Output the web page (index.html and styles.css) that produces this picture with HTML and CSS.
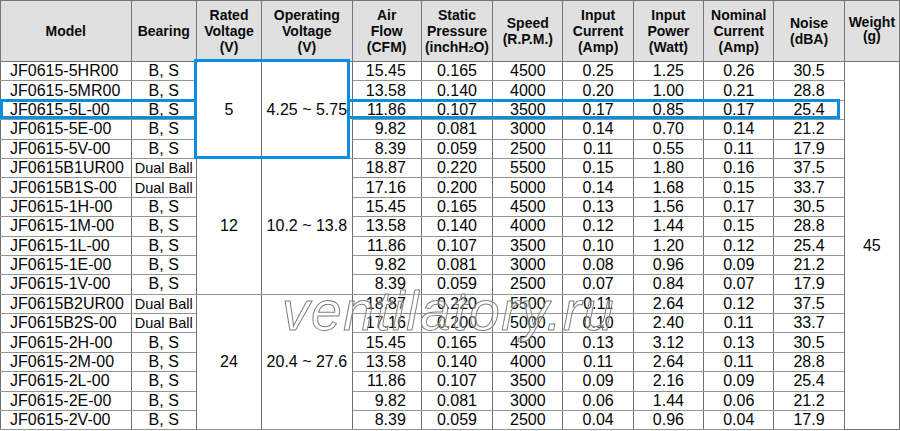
FILE: index.html
```html
<!DOCTYPE html>
<html>
<head>
<meta charset="utf-8">
<link rel="stylesheet" href="styles.css">
</head>
<body>
<div class="sheet">
  <table class="spec">
    <colgroup>
      <col class="c-model"><col class="c-bear"><col class="c-rated"><col class="c-oper"><col class="c-air"><col class="c-stat"><col class="c-speed"><col class="c-cur"><col class="c-pow"><col class="c-nom"><col class="c-noise"><col class="c-wt">
    </colgroup>
    <thead>
      <tr>
        <th>Model</th>
        <th>Bearing</th>
        <th>Rated<br>Voltage<br>(V)</th>
        <th>Operating<br>Voltage<br>(V)</th>
        <th>Air<br>Flow<br>(CFM)</th>
        <th>Static<br>Pressure<br>(inchH<span class="sub">2</span>O)</th>
        <th>Speed<br>(R.P.M.)</th>
        <th>Input<br>Current<br>(Amp)</th>
        <th>Input<br>Power<br>(Watt)</th>
        <th>Nominal<br>Current<br>(Amp)</th>
        <th>Noise<br>(dBA)</th>
        <th class="wt-h">Weight<br>(g)</th>
      </tr>
    </thead>
    <tbody>
      <tr><td class="model">JF0615-5HR00</td><td>B, S</td><td rowspan="5">5</td><td rowspan="5">4.25 ~ 5.75</td><td class="air">15.45</td><td>0.165</td><td>4500</td><td>0.25</td><td>1.25</td><td>0.26</td><td>30.5</td><td rowspan="19" class="wt">45</td></tr>
      <tr><td class="model">JF0615-5MR00</td><td>B, S</td><td class="air">13.58</td><td>0.140</td><td>4000</td><td>0.20</td><td>1.00</td><td>0.21</td><td>28.8</td></tr>
      <tr><td class="model">JF0615-5L-00</td><td>B, S</td><td class="air">11.86</td><td>0.107</td><td>3500</td><td>0.17</td><td>0.85</td><td>0.17</td><td>25.4</td></tr>
      <tr><td class="model">JF0615-5E-00</td><td>B, S</td><td class="air">9.82</td><td>0.081</td><td>3000</td><td>0.14</td><td>0.70</td><td>0.14</td><td>21.2</td></tr>
      <tr><td class="model">JF0615-5V-00</td><td>B, S</td><td class="air">8.39</td><td>0.059</td><td>2500</td><td>0.11</td><td>0.55</td><td>0.11</td><td>17.9</td></tr>
      <tr><td class="model">JF0615B1UR00</td><td class="dual">Dual Ball</td><td rowspan="7">12</td><td rowspan="7">10.2 ~ 13.8</td><td class="air">18.87</td><td>0.220</td><td>5500</td><td>0.15</td><td>1.80</td><td>0.16</td><td>37.5</td></tr>
      <tr><td class="model">JF0615B1S-00</td><td class="dual">Dual Ball</td><td class="air">17.16</td><td>0.200</td><td>5000</td><td>0.14</td><td>1.68</td><td>0.15</td><td>33.7</td></tr>
      <tr><td class="model">JF0615-1H-00</td><td>B, S</td><td class="air">15.45</td><td>0.165</td><td>4500</td><td>0.13</td><td>1.56</td><td>0.17</td><td>30.5</td></tr>
      <tr><td class="model">JF0615-1M-00</td><td>B, S</td><td class="air">13.58</td><td>0.140</td><td>4000</td><td>0.12</td><td>1.44</td><td>0.15</td><td>28.8</td></tr>
      <tr><td class="model">JF0615-1L-00</td><td>B, S</td><td class="air">11.86</td><td>0.107</td><td>3500</td><td>0.10</td><td>1.20</td><td>0.12</td><td>25.4</td></tr>
      <tr><td class="model">JF0615-1E-00</td><td>B, S</td><td class="air">9.82</td><td>0.081</td><td>3000</td><td>0.08</td><td>0.96</td><td>0.09</td><td>21.2</td></tr>
      <tr><td class="model">JF0615-1V-00</td><td>B, S</td><td class="air">8.39</td><td>0.059</td><td>2500</td><td>0.07</td><td>0.84</td><td>0.07</td><td>17.9</td></tr>
      <tr><td class="model">JF0615B2UR00</td><td class="dual">Dual Ball</td><td rowspan="7">24</td><td rowspan="7">20.4 ~ 27.6</td><td class="air">18.87</td><td>0.220</td><td>5500</td><td>0.11</td><td>2.64</td><td>0.12</td><td>37.5</td></tr>
      <tr><td class="model">JF0615B2S-00</td><td class="dual">Dual Ball</td><td class="air">17.16</td><td>0.200</td><td>5000</td><td>0.10</td><td>2.40</td><td>0.11</td><td>33.7</td></tr>
      <tr><td class="model">JF0615-2H-00</td><td>B, S</td><td class="air">15.45</td><td>0.165</td><td>4500</td><td>0.13</td><td>3.12</td><td>0.13</td><td>30.5</td></tr>
      <tr><td class="model">JF0615-2M-00</td><td>B, S</td><td class="air">13.58</td><td>0.140</td><td>4000</td><td>0.11</td><td>2.64</td><td>0.11</td><td>28.8</td></tr>
      <tr><td class="model">JF0615-2L-00</td><td>B, S</td><td class="air">11.86</td><td>0.107</td><td>3500</td><td>0.09</td><td>2.16</td><td>0.09</td><td>25.4</td></tr>
      <tr><td class="model">JF0615-2E-00</td><td>B, S</td><td class="air">9.82</td><td>0.081</td><td>3000</td><td>0.06</td><td>1.44</td><td>0.06</td><td>21.2</td></tr>
      <tr><td class="model">JF0615-2V-00</td><td>B, S</td><td class="air">8.39</td><td>0.059</td><td>2500</td><td>0.04</td><td>0.96</td><td>0.04</td><td>17.9</td></tr>
    </tbody>
  </table>
  <div class="hl-volt"></div>
  <div class="hl-row-left"></div>
  <div class="hl-row-right"></div>
  <div class="watermark">ventilatory.ru</div>
</div>
</body>
</html>
```
FILE: styles.css
```css
html, body {
  margin: 0;
  padding: 0;
  background: #ffffff;
}

body {
  font-family: "Liberation Sans", Arial, Helvetica, sans-serif;
  color: #000000;
}

.sheet {
  position: relative;
  width: 900px;
  height: 431px;
  overflow: hidden;
}

.spec {
  width: 900px;
  border-collapse: collapse;
  table-layout: fixed;
}

.c-model { width: 130px; }
.c-bear  { width: 65px; }
.c-rated { width: 65px; }
.c-oper  { width: 90px; }
.c-air   { width: 69px; }
.c-stat  { width: 71px; }
.c-speed { width: 70px; }
.c-cur   { width: 70px; }
.c-pow   { width: 70px; }
.c-nom   { width: 70px; }
.c-noise { width: 70px; }
.c-wt    { width: 55px; }

.spec th {
  background: #e0e0e0;
  font-weight: bold;
  font-size: 14px;
  line-height: 16px;
  height: 56px;
  padding: 0;
  border: 1px solid #767676;
  text-align: center;
  vertical-align: middle;
  color: #0a0a0a;
}

.spec th.wt-h {
  line-height: 14px;
  padding-bottom: 4px;
}

.sub {
  font-size: 9px;
  line-height: 0;
}

.spec td {
  font-size: 16px;
  line-height: 18px;
  height: 18.4px;
  padding: 0;
  border-left: 1px solid #707070;
  border-right: 1px solid #707070;
  border-top: 1px solid #959595;
  border-bottom: 1px solid #959595;
  text-align: center;
  vertical-align: middle;
  white-space: nowrap;
  color: #050505;
}

.spec td.model {
  text-align: left;
  padding-left: 9px;
}

.spec td.air {
  text-align: right;
  padding-right: 15px;
}

.spec td.dual {
  font-size: 14.5px;
}

.spec td.wt {
  border-bottom: 1px solid #707070;
}

.hl-volt {
  position: absolute;
  left: 194px;
  top: 59px;
  width: 150px;
  height: 94px;
  border: 3px solid #0a8fe0;
}

.hl-row-left {
  position: absolute;
  left: 0;
  top: 99px;
  width: 191px;
  height: 14px;
  border: 3px solid #0a8fe0;
  border-right: none;
}

.hl-row-right {
  position: absolute;
  left: 350px;
  top: 99px;
  width: 487px;
  height: 14px;
  border: 3px solid #0a8fe0;
  border-left: none;
}

.watermark {
  position: absolute;
  left: 282px;
  top: 284px;
  font-family: "Liberation Sans", Arial, sans-serif;
  font-style: italic;
  font-size: 55px;
  line-height: 55px;
  letter-spacing: 1.6px;
  color: rgba(255, 255, 255, 0.3);
  -webkit-text-stroke: 1px #808080;
  white-space: nowrap;
  pointer-events: none;
}
```
